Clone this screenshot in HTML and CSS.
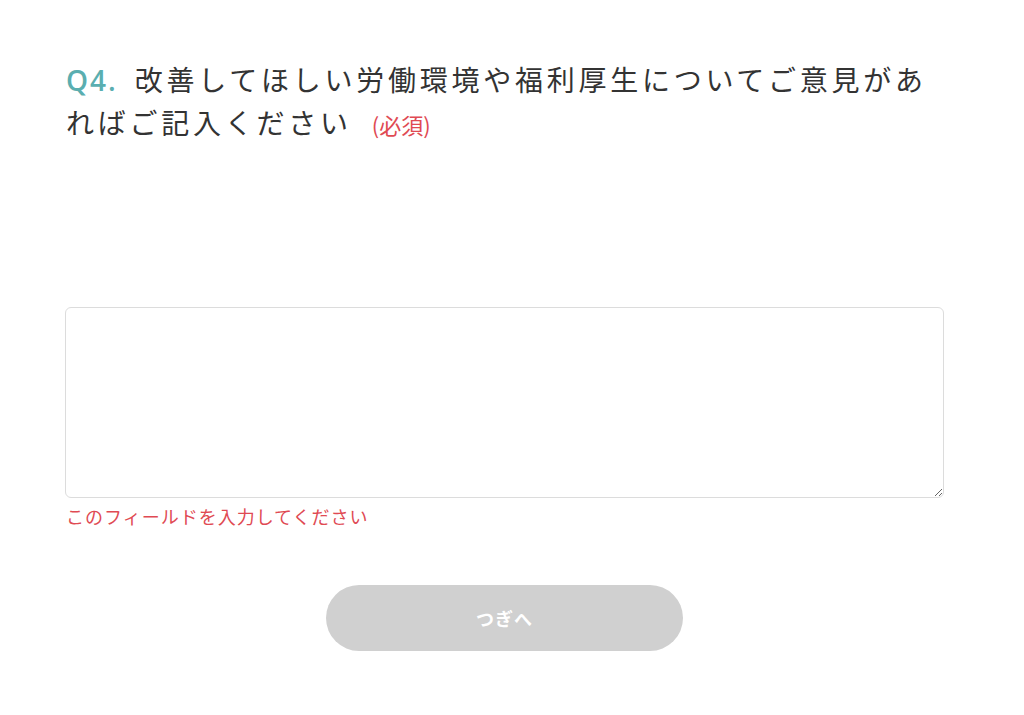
FILE: index.html
```html
<!DOCTYPE html>
<html lang="ja">
<head>
<meta charset="utf-8">
<link rel="stylesheet" href="styles.css">
</head>
<body>
<main class="page">
  <h1 class="question"><span class="qnum">Q4.</span>改善してほしい労働環境や福利厚生についてご意見があればご記入ください<span class="required">(必須)</span></h1>
  <div class="field">
    <textarea class="answer"></textarea>
    <p class="error">このフィールドを入力してください</p>
  </div>
  <div class="actions">
    <button class="next" type="button" disabled>つぎへ</button>
  </div>
</main>
</body>
</html>
```
FILE: styles.css
```css
html, body {
  margin: 0;
  padding: 0;
  background: #ffffff;
}
body {
  font-family: "Noto Sans CJK JP", "Noto Sans", sans-serif;
  color: #333333;
}
.page {
  width: 879px;
  margin: 0 0 0 65px;
  padding-top: 58px;
}
.question {
  margin: 0;
  font-size: 28px;
  font-weight: 400;
  line-height: 42px;
  letter-spacing: 3.75px;
  color: #333333;
  padding-left: 1px;
}
.qnum {
  color: #5aaeb0;
  font-family: "Open Sans", "Noto Sans", sans-serif;
  font-weight: 600;
  letter-spacing: 2px;
  margin-right: 17px;
}
.required {
  font-size: 22px;
  color: #e04a53;
  letter-spacing: 0;
  margin-left: 20px;
  vertical-align: 0;
}
.field {
  margin-top: 162px;
}
.answer {
  display: block;
  box-sizing: border-box;
  width: 879px;
  height: 191px;
  border: 1px solid #dcdcdc;
  border-radius: 6px;
  background: #fff;
  margin: 0;
  padding: 10px;
  font-family: inherit;
}
.error {
  margin: 5px 0 0 1px;
  font-size: 18px;
  line-height: 26px;
  letter-spacing: 1px;
  color: #e04a53;
}
.actions {
  display: flex;
  justify-content: center;
  margin-top: 56px;
}
.next {
  width: 357px;
  height: 66px;
  border: none;
  border-radius: 33px;
  background: #d0d0d0;
  color: #ffffff;
  font-family: "Noto Sans CJK JP", sans-serif;
  font-size: 18px;
  font-weight: 700;
  letter-spacing: 1px;
}
```
